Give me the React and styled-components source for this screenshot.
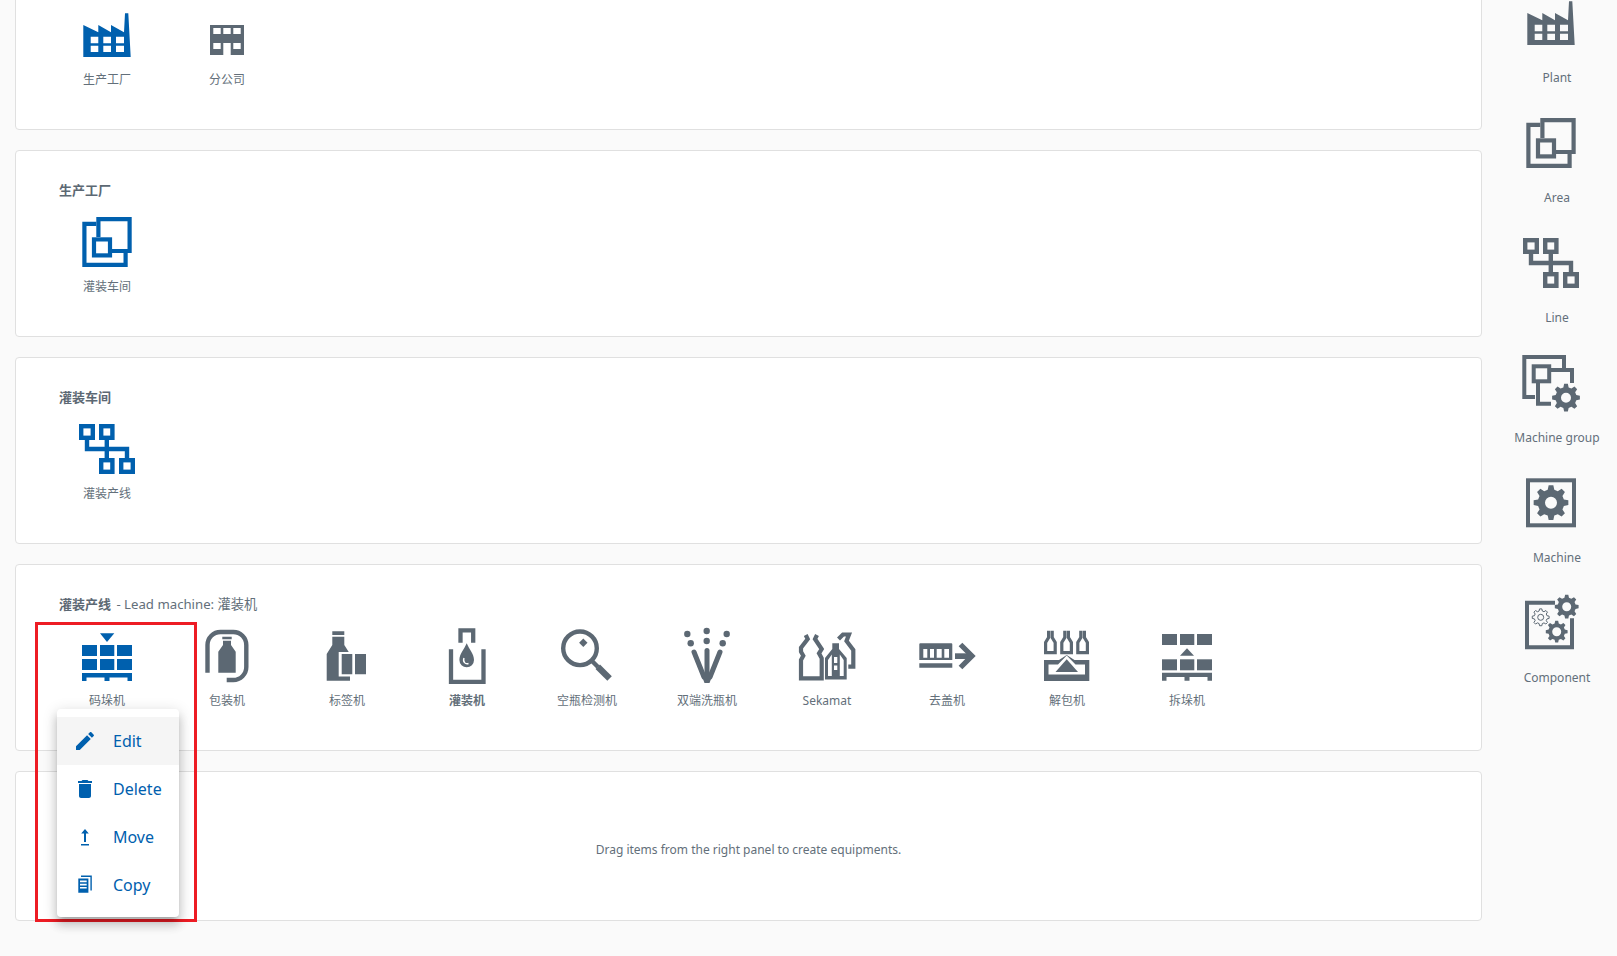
import React from 'react';
import styled, { createGlobalStyle } from 'styled-components';

const GlobalStyle = createGlobalStyle`
  html, body {
    margin: 0;
    padding: 0;
    background: #fafafa;
    font-family: "Noto Sans", "Noto Sans CJK SC", sans-serif;
    color: #636f7a;
  }
`;

const Page = styled.div`
  display: flex;
  width: 1617px;
  height: 956px;
  overflow: hidden;
  background: #fafafa;
`;

// the page is scrolled in the picture, so the columns start above the fold
const Main = styled.div`
  width: 1497px;
  margin-top: -57px;
  padding: 0 15px;
  box-sizing: border-box;
  display: flex;
  flex-direction: column;
  gap: 20px;
`;

const Card = styled.section`
  position: relative;
  box-sizing: border-box;
  height: 187px;
  background: #fff;
  border: 1px solid #e0e0e0;
  border-radius: 4px;
  padding: 30px 31px 0;
`;

const EmptyCard = styled(Card)`
  height: 150px;
  padding: 7px 0 0;
  display: flex;
  align-items: center;
  justify-content: center;
  font-size: 12px;
`;

const Title = styled.div`
  height: 18px;
  line-height: 18px;
  margin: 0 0 18px 12px;
  font-size: 13.2px;
  strong {
    font-size: 13px;
    font-weight: 600;
    margin-right: 2px;
    color: #5c6873;
  }
`;

const TileRow = styled.div`
  display: flex;
  min-height: 77px;
`;

const Tile = styled.div`
  width: 120px;
  display: flex;
  flex-direction: column;
  align-items: center;
`;

const Label = styled.div`
  margin-top: 12px;
  height: 16px;
  line-height: 16px;
  font-size: 12px;
  white-space: nowrap;
  font-weight: ${(p) => (p.$bold ? 600 : 400)};
`;

const Svg = styled.svg`
  display: block;
  width: 50px;
  height: 50px;
  overflow: visible;
  color: ${(p) => (p.$blue ? '#0060ae' : '#5c6873')};
`;

const Sidebar = styled.aside`
  width: 120px;
  margin-top: -12px;
  flex: none;
`;

const SideTile = styled.div`
  height: 120px;
  box-sizing: border-box;
  padding-top: 10px;
  display: flex;
  flex-direction: column;
  align-items: center;
`;

const SideIcon = styled.div`
  margin-right: 12px;
`;

const SideLabel = styled(Label)`
  margin-top: 22px;
`;

const RedBox = styled.div`
  position: absolute;
  left: 19px;
  top: 57px;
  width: 162px;
  height: 300px;
  box-sizing: border-box;
  border: 3px solid #ed1c24;
  z-index: 2;
  pointer-events: none;
`;

const Menu = styled.div`
  position: absolute;
  left: 41px;
  top: 144px;
  width: 122px;
  padding: 8px 0;
  background: #fff;
  border-radius: 4px;
  z-index: 3;
  box-shadow: 0 5px 5px -3px rgba(0, 0, 0, 0.2), 0 8px 10px 1px rgba(0, 0, 0, 0.14),
    0 3px 14px 2px rgba(0, 0, 0, 0.12);
`;

const MenuItem = styled.div`
  height: 48px;
  display: flex;
  align-items: center;
  gap: 16px;
  padding-left: 16px;
  font-size: 16px;
  color: #0060ae;
  background: ${(p) => (p.$hover ? '#f5f5f5' : 'transparent')};
  svg {
    flex: none;
    width: 24px;
    height: 24px;
    fill: currentColor;
  }
`;

function gear(cx, cy, R, hole, teeth = 8) {
  const r = R * 0.76;
  const step = (Math.PI * 2) / teeth;
  const pts = [];
  for (let i = 0; i < teeth; i++) {
    const a = i * step - Math.PI / 2;
    const at = (rad, da) => `${(cx + rad * Math.cos(a + da)).toFixed(2)} ${(cy + rad * Math.sin(a + da)).toFixed(2)}`;
    pts.push(at(r, -step * 0.32), at(R, -step * 0.17), at(R, step * 0.17), at(r, step * 0.32));
  }
  const h = `M${cx - hole} ${cy}a${hole} ${hole} 0 1 0 ${hole * 2} 0a${hole} ${hole} 0 1 0 ${-hole * 2} 0z`;
  return `M${pts.join('L')}z${h}`;
}

const Line = ({ w = 4, children }) => (
  <g fill="none" stroke="currentColor" strokeWidth={w}>
    {children}
  </g>
);

const pallet = (y) => `M0 ${y}H50V${y + 8}H45.5V${y + 4.4}H27.5V${y + 8}H22.5V${y + 4.4}H4.5V${y + 8}H0z`;

const bricks = (rows) =>
  rows.map((y) =>
    [0, 18, 35].map((x) => <rect key={`${x}-${y}`} x={x} y={y} width={x === 18 ? 14.3 : 15} height="11" />)
  );

const ICONS = {
  plant: (
    <path
      fillRule="evenodd"
      d="M1.3 15L16.3 22.3V15L29 22.3V15L42 22.3L43 3.3H46.3L48.7 47H1.3zM8.7 26.7V33.3H16.3V26.7zM21.3 26.7V33.3H29V26.7zM34 26.7V33.3H42V26.7zM8.7 35.7V42H16.3V35.7zM21.3 35.7V42H29V35.7zM34 35.7V42H42V35.7z"
    />
  ),
  branch: (
    <path
      fillRule="evenodd"
      d="M8 15H42V45H28.7V33H21.3V45H8zM11.3 18V24H18.7V18zM21.3 18V24H28.7V18zM31.3 18V24H38.7V18zM11.3 33V39H18.7V33zM31.3 33V39H38.7V33z"
    />
  ),
  area: (
    <Line w={4.2}>
      <path d="M14.3 6.8H2.4V47.9H43.6V36" />
      <path d="M16.4 20V2.1H47.6V34H30" />
      <rect x="12" y="22.4" width="16" height="16" />
    </Line>
  ),
  line: (
    <Line w={4.4}>
      <rect x="-0.8" y="2.2" width="11.6" height="11.6" />
      <rect x="19.2" y="2.2" width="11.2" height="11.6" />
      <rect x="19.2" y="36.2" width="11.2" height="11.6" />
      <rect x="39.2" y="36.2" width="11.6" height="11.6" />
      <path d="M5 16V25H45V34M24.8 16V34" />
    </Line>
  ),
  group: (
    <>
      <Line>
        <path d="M38 11V-1H-1.7V39H9" />
        <path d="M25 12H46V25M12 25V45.7H25" />
        <rect x="7.7" y="8.3" width="15.5" height="15" />
      </Line>
      <path fillRule="evenodd" d={gear(40, 39.7, 14, 5)} />
    </>
  ),
  machine: (
    <>
      <Line>
        <rect x="2" y="2.3" width="46" height="45" />
      </Line>
      <path fillRule="evenodd" d={gear(25, 24.7, 17.5, 6)} />
    </>
  ),
  component: (
    <>
      <Line>
        <path d="M29 4.7H1V49.3H46V20.3" />
      </Line>
      <path fillRule="evenodd" d={gear(40.7, 8.7, 12, 4.5)} />
      <path fillRule="evenodd" d={gear(30.7, 33.7, 11, 4.5)} />
      <path d={gear(14.7, 19.3, 8.5, 3)} fill="none" stroke="currentColor" strokeWidth="1" />
    </>
  ),
  palletizer: (
    <>
      <path d="M18 2.3H32.3L25 11z" />
      {bricks([14, 28])}
      <path d={pallet(42)} />
    </>
  ),
  packer: (
    <>
      <Line w={4.4}>
        <path d="M5.5 41.7V14A13 13 0 0 1 18.5 1H31.3A13 13 0 0 1 44.3 14V36A13 13 0 0 1 31.3 49H24.7" />
      </Line>
      <path d="M20.3 5.7H29.7V8.3H20.3zM21 9.7H29V14L33.7 20.7V41.7H16.3V20.7L21 14z" />
    </>
  ),
  labeler: (
    <>
      <path d="M10.3 0.3H22.3V4H10.3zM10.3 5.7H22.3V14L28 23V49.7H4.7V23L10.3 14z" />
      <rect x="16.7" y="21" width="15.6" height="24.5" fill="#fff" />
      <path d="M19.7 23H30.3V43.3H19.7zM33 23H44V43.3H33z" />
    </>
  ),
  filler: (
    <>
      <Line w={4.3}>
        <path d="M18.5 11.7V-0.6H31.2V11.7" />
        <path d="M9 18.3V50.8H41.5V18.3" />
      </Line>
      <path d="M24.7 12.3C27 18 32 23 32 29A7.3 7.3 0 0 1 17.4 29C17.4 23 22.4 18 24.7 12.3z" />
      <path d="M22 27C20.5 31 23.5 33.5 26.5 32.5" fill="none" stroke="#fff" strokeWidth="1.4" />
    </>
  ),
  inspection: (
    <>
      <Line w={4.4}>
        <circle cx="18" cy="17.3" r="16.8" />
        <path d="M30 30L36 36" />
      </Line>
      <path d="M33.5 38L38 33.5L49.8 45.3L45.3 49.8z" />
      <path d="M21.3 7.5L25.5 11.7L21.3 15.9L17.1 11.7z" />
    </>
  ),
  washer: (
    <>
      {[[5.3, 3], [24.7, 0], [44.7, 3], [8.7, 12.3], [24.7, 10], [40.7, 12.3]].map(([cx, cy]) => (
        <circle key={`${cx}-${cy}`} cx={cx} cy={cy} r="3.2" />
      ))}
      <g fill="none" stroke="currentColor" strokeWidth="5" strokeLinecap="round">
        <path d="M12 21L22 46" />
        <path d="M38 21L28 46" />
        <path d="M25 19.5V46" />
      </g>
      <path d="M19.5 44H30.5L27.5 52H22.5z" />
    </>
  ),
  sekamat: (
    <>
      <Line w={4.2}>
        <path d="M3.7 4L5.7 8L-1 16.7V20.7L1.3 24.7L-1 29V47.3H19.7V27.3L17 22.3L19.7 18L13 8L15 4" />
        <path d="M36.5 8L41 3.5H47L44.5 10L51.3 19V35.7H46.3" />
      </Line>
      <path
        fillRule="evenodd"
        d="M30.3 12.3H37V18L44.7 27V48.5H23V27L30.3 18zM26 29V45H29.8V23.5zM37.8 23.5V45H41.7V29zM32 26V32H35.3V26zM32 34.5V39H35.3V34.5z"
      />
    </>
  ),
  decapper: (
    <>
      <path
        fillRule="evenodd"
        d="M-2.7 13.3Q-2.7 12.3 -1.7 12.3H29.3Q30.3 12.3 30.3 13.3V29H-2.7zM1.3 18V26.7H5.3V18zM8 18V26.7H12V18zM14.7 18V26.7H19.7V18zM22.3 18V26.7H27V18z"
      />
      <path d="M-2.7 32.3H30.3V36.7H-2.7z" />
      <path d="M33 22.3H48V28H33z" />
      <Line w={5.2}>
        <path d="M38.5 13.5L50 24.9L38.5 36.5" />
      </Line>
    </>
  ),
  unpacker: (
    <>
      <Line w={3.2}>
        {[2, 18.2, 34.2].map((x) => (
          <path key={x} d={`M${x + 4.6} -0.3V6.5L${x + 1.6} 11.5V21.7H${x + 11.2}V11.5L${x + 8.2} 6.5V-0.3`} />
        ))}
      </Line>
      <path
        fillRule="evenodd"
        d="M2 29H17L24.7 24L32.5 29H47.3V50H2zM6.5 33.5V43.5H43V33.5H33.5L24.7 24.5L16 33.5z"
      />
      <path d="M13.5 41H36L24.7 28.3z" />
    </>
  ),
  depalletizer: (
    <>
      {bricks([3, 28.3])}
      <path d="M18 24.7H32L25 17.3z" />
      <path d={pallet(41.7)} />
    </>
  ),
};

const Icon = ({ name, blue }) => (
  <Svg viewBox="0 0 50 50" fill="currentColor" $blue={blue}>
    {ICONS[name]}
  </Svg>
);

const LINE_ITEMS = [
  { icon: 'palletizer', label: '码垛机', blue: true },
  { icon: 'packer', label: '包装机' },
  { icon: 'labeler', label: '标签机' },
  { icon: 'filler', label: '灌装机', bold: true },
  { icon: 'inspection', label: '空瓶检测机' },
  { icon: 'washer', label: '双端洗瓶机' },
  { icon: 'sekamat', label: 'Sekamat' },
  { icon: 'decapper', label: '去盖机' },
  { icon: 'unpacker', label: '解包机' },
  { icon: 'depalletizer', label: '拆垛机' },
];

const SIDE_ITEMS = [
  { icon: 'plant', label: 'Plant' },
  { icon: 'area', label: 'Area' },
  { icon: 'line', label: 'Line' },
  { icon: 'group', label: 'Machine group' },
  { icon: 'machine', label: 'Machine' },
  { icon: 'component', label: 'Component' },
];

const MENU_ITEMS = [
  {
    label: 'Edit',
    hover: true,
    d: 'M3 17.25V21h3.75L17.81 9.94l-3.75-3.75L3 17.25zM20.71 7.04c.39-.39.39-1.02 0-1.41l-2.34-2.34c-.39-.39-1.02-.39-1.41 0l-1.83 1.83 3.75 3.75 1.83-1.83z',
  },
  { label: 'Delete', d: 'M6 19c0 1.1.9 2 2 2h8c1.1 0 2-.9 2-2V7H6v12zM19 4h-3.5l-1-1h-5l-1 1H5v2h14V4z' },
  { label: 'Move', d: 'M12 4L8.2 8.6H11V17H13V8.6H15.8zM8 19H16V20.4H8z' },
  {
    label: 'Copy',
    d: 'M5.3 5.6H15.4V19.8H5.3zM7 7.6V9.2H13.7V7.6zM7 10.8V12.4H13.7V10.8zM7 14V15.6H13.7V14zM8 2.6H18.8V17.6H17.4V4H8z',
  },
];

const Node = ({ icon, label, blue, bold }) => (
  <Tile>
    <Icon name={icon} blue={blue} />
    <Label $bold={bold}>{label}</Label>
  </Tile>
);

export default function App() {
  return (
    <Page>
      <GlobalStyle />
      <Main>
        <Card>
          <Title />
          <TileRow>
            <Node icon="plant" label="生产工厂" blue />
            <Node icon="branch" label="分公司" />
          </TileRow>
        </Card>
        <Card>
          <Title>
            <strong>生产工厂</strong>
          </Title>
          <TileRow>
            <Node icon="area" label="灌装车间" blue />
          </TileRow>
        </Card>
        <Card>
          <Title>
            <strong>灌装车间</strong>
          </Title>
          <TileRow>
            <Node icon="line" label="灌装产线" blue />
          </TileRow>
        </Card>
        <Card>
          <Title>
            <strong>灌装产线</strong> - Lead machine: 灌装机
          </Title>
          <TileRow>
            {LINE_ITEMS.map((item) => (
              <Node key={item.label} {...item} />
            ))}
          </TileRow>
          <RedBox />
          <Menu>
            {MENU_ITEMS.map((item) => (
              <MenuItem key={item.label} $hover={item.hover}>
                <svg viewBox="0 0 24 24" fillRule="evenodd">
                  <path d={item.d} />
                </svg>
                {item.label}
              </MenuItem>
            ))}
          </Menu>
        </Card>
        <EmptyCard>Drag items from the right panel to create equipments.</EmptyCard>
      </Main>
      <Sidebar>
        {SIDE_ITEMS.map((item) => (
          <SideTile key={item.label}>
            <SideIcon>
              <Icon name={item.icon} />
            </SideIcon>
            <SideLabel>{item.label}</SideLabel>
          </SideTile>
        ))}
      </Sidebar>
    </Page>
  );
}
